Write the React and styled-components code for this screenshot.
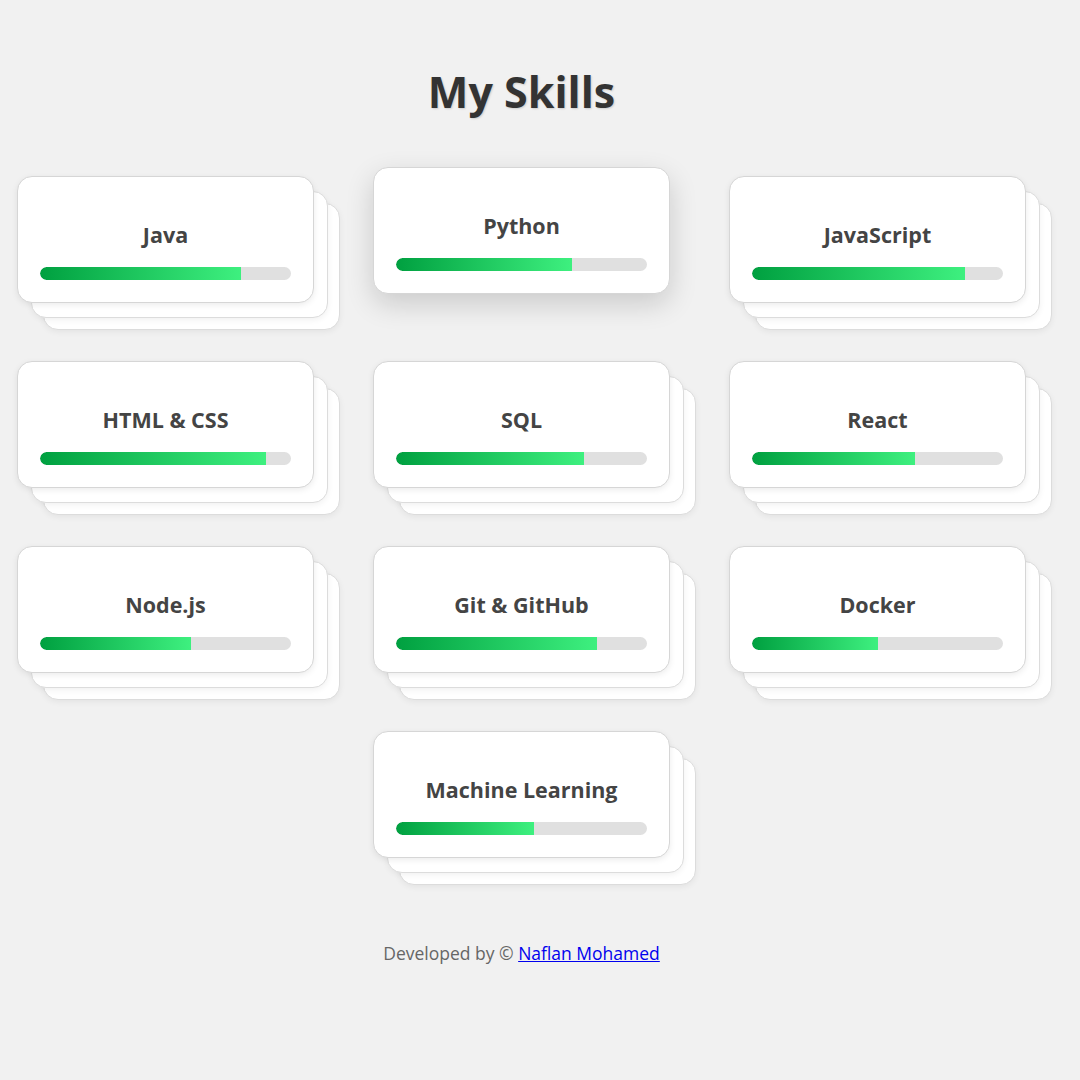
import React from "react";
import styled, { createGlobalStyle, css } from "styled-components";

const skills = [
  { name: "Java", level: 80 },
  { name: "Python", level: 70, active: true },
  { name: "JavaScript", level: 85 },
  { name: "HTML & CSS", level: 90 },
  { name: "SQL", level: 75 },
  { name: "React", level: 65 },
  { name: "Node.js", level: 60 },
  { name: "Git & GitHub", level: 80 },
  { name: "Docker", level: 50 },
  { name: "Machine Learning", level: 55 },
];

const GlobalStyle = createGlobalStyle`
  html, body {
    margin: 0;
    padding: 0;
    background: #f1f1f1;
    font-family: "Open Sans", "Noto Sans", sans-serif;
  }
`;

const Page = styled.div`
  width: 1043px;
  min-height: 1080px;
  display: flex;
  flex-direction: column;
  align-items: center;
  padding-top: 62px;
  box-sizing: border-box;
`;

const Heading = styled.h1`
  margin: 0 0 54px 0;
  font-size: 43px;
  line-height: 60px;
  font-weight: 700;
  color: #333333;
  text-shadow: 1px 1px 2px rgba(0, 0, 0, 0.15);
`;

const Grid = styled.div`
  display: grid;
  grid-template-columns: repeat(3, 297px);
  column-gap: 59px;
  row-gap: 58px;
  justify-content: center;
`;

const layer = css`
  content: "";
  position: absolute;
  inset: 0;
  background: #ffffff;
  border: 1px solid #dcdcdc;
  border-radius: 15px;
  box-shadow: 0 2px 6px rgba(0, 0, 0, 0.06);
  box-sizing: border-box;
`;

const CardStack = styled.div`
  position: relative;
  height: 127px;
  ${(p) => p.$center && "grid-column: 2;"}
  ${(p) =>
    !p.$active &&
    css`
      &::before {
        ${layer};
        transform: translate(26px, 27px);
        z-index: 0;
      }
      &::after {
        ${layer};
        transform: translate(14px, 15px);
        z-index: 1;
      }
    `}
`;

const Card = styled.div`
  position: relative;
  z-index: 2;
  height: 127px;
  box-sizing: border-box;
  background: #ffffff;
  border: 1px solid #d6d6d6;
  border-radius: 15px;
  padding: 43px 22px 0 22px;
  display: flex;
  flex-direction: column;
  align-items: stretch;
  box-shadow: ${(p) =>
    p.$active ? "0 10px 28px rgba(0, 0, 0, 0.16)" : "0 2px 6px rgba(0, 0, 0, 0.08)"};
  transform: ${(p) => (p.$active ? "translateY(-9px)" : "none")};
`;

const SkillName = styled.div`
  text-align: center;
  font-size: 21.5px;
  line-height: 30px;
  font-weight: 700;
  color: #444444;
  margin-bottom: 17px;
`;

const Track = styled.div`
  height: 13px;
  border-radius: 7px;
  background: #e0e0e0;
  overflow: hidden;
`;

const Fill = styled.div`
  height: 100%;
  border-radius: 7px 0 0 7px;
  background: linear-gradient(90deg, #00a040, #3ef07f);
`;

const Footer = styled.footer`
  margin-top: 83px;
  font-size: 17.5px;
  color: #666666;
`;

const Link = styled.a`
  color: #0000ee;
  text-decoration: underline;
`;

export default function App() {
  return (
    <>
      <GlobalStyle />
      <Page>
        <Heading>My Skills</Heading>
        <Grid>
          {skills.map((s, i) => (
            <CardStack
              key={s.name}
              $active={s.active}
              $center={i === skills.length - 1}
            >
              <Card $active={s.active}>
                <SkillName>{s.name}</SkillName>
                <Track>
                  <Fill style={{ width: `${s.level}%` }} />
                </Track>
              </Card>
            </CardStack>
          ))}
        </Grid>
        <Footer>
          Developed by © <Link href="#">Naflan Mohamed</Link>
        </Footer>
      </Page>
    </>
  );
}
